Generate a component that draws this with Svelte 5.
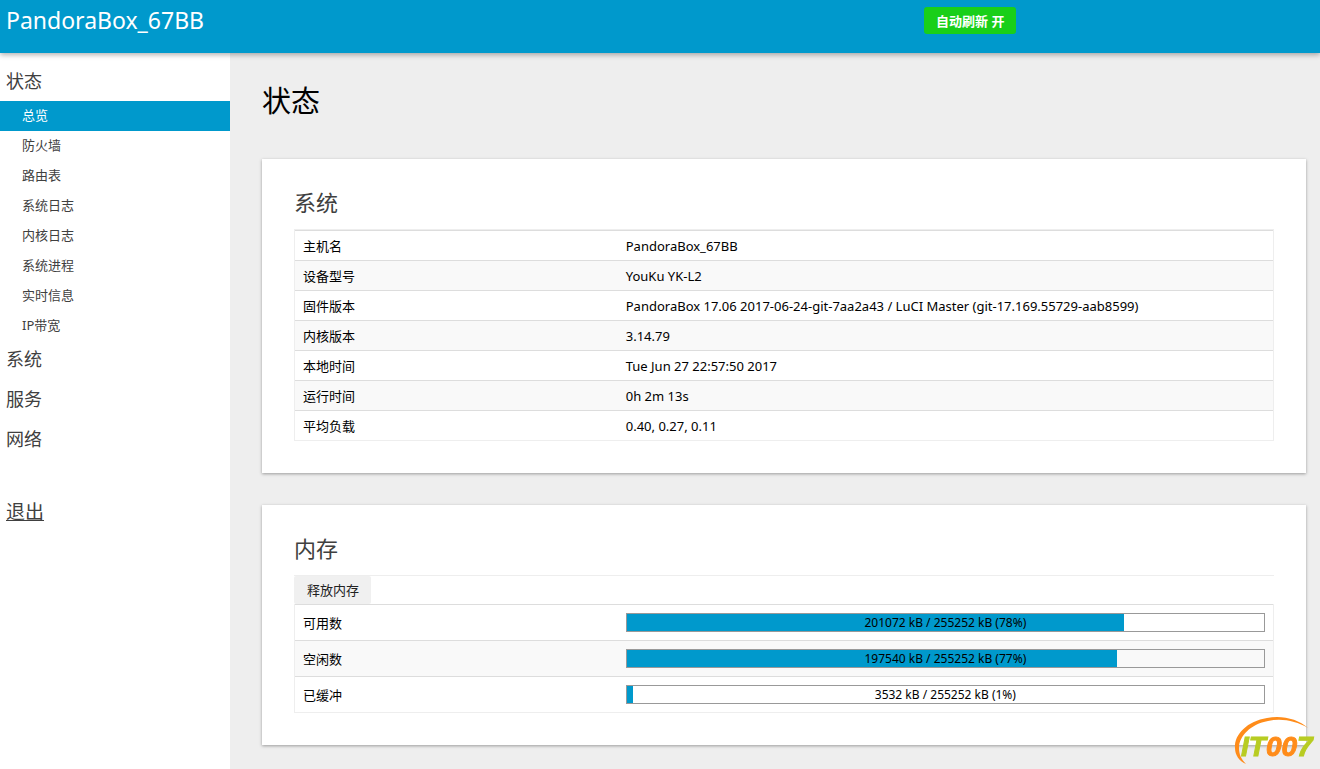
<script>
  const hostname = 'PandoraBox_67BB';

  const statusPages = [
    '总览',
    '防火墙',
    '路由表',
    '系统日志',
    '内核日志',
    '系统进程',
    '实时信息',
    'IP带宽',
  ];

  const sections = ['系统', '服务', '网络'];

  const systemInfo = [
    ['主机名', hostname],
    ['设备型号', 'YouKu YK-L2'],
    ['固件版本', 'PandoraBox 17.06 2017-06-24-git-7aa2a43 / LuCI Master (git-17.169.55729-aab8599)'],
    ['内核版本', '3.14.79'],
    ['本地时间', 'Tue Jun 27 22:57:50 2017'],
    ['运行时间', '0h 2m 13s'],
    ['平均负载', '0.40, 0.27, 0.11'],
  ];

  const total = 255252;
  const memory = [
    { label: '可用数', value: 201072, percent: 78 },
    { label: '空闲数', value: 197540, percent: 77 },
    { label: '已缓冲', value: 3532, percent: 1 },
  ];

  let activePage = $state('总览');
  let autoRefresh = $state(true);
</script>

<header>
  <a class="brand" href="#home">{hostname}</a>
  <button class="refresh" class:off={!autoRefresh} onclick={() => (autoRefresh = !autoRefresh)}>
    自动刷新 {autoRefresh ? '开' : '关'}
  </button>
</header>

<div class="layout">
  <nav>
    <ul class="menu">
      <li>
        <a class="section" href="#status">状态</a>
        <ul class="submenu">
          {#each statusPages as page}
            <li>
              <a href="#status" class:active={page === activePage} onclick={() => (activePage = page)}>{page}</a>
            </li>
          {/each}
        </ul>
      </li>
      {#each sections as section}
        <li><a class="section" href="#menu">{section}</a></li>
      {/each}
    </ul>
    <a class="logout" href="#logout">退出</a>
  </nav>

  <main>
    <h1>状态</h1>

    <section class="card">
      <h2>系统</h2>
      <div class="panel">
        <table>
          <tbody>
            {#each systemInfo as [label, value]}
              <tr>
                <th scope="row">{label}</th>
                <td>{value}</td>
              </tr>
            {/each}
          </tbody>
        </table>
      </div>
    </section>

    <section class="card">
      <h2>内存</h2>
      <div class="toolbar">
        <button class="flush">释放内存</button>
      </div>
      <div class="panel joined">
        <table class="memory">
          <tbody>
            {#each memory as row}
              <tr>
                <th scope="row">{row.label}</th>
                <td>
                  <div class="bar">
                    <div class="fill" style="width: {row.percent}%"></div>
                    <span>{row.value} kB / {total} kB ({row.percent}%)</span>
                  </div>
                </td>
              </tr>
            {/each}
          </tbody>
        </table>
      </div>
    </section>
  </main>
</div>

<svg class="logo" viewBox="0 0 84 52" width="84" height="52" aria-label="IT007">
  <path
    fill="#ff8c1a"
    d="M75 14C65 5 49 1 34 4C15 7 1 20 2 34C2 41 6 47 13 50C8 45 6 40 6 34C6 22 18 10 35 7C49 4 63 7 75 14Z"
  />
  <text x="8" y="42" font-size="28">
    <tspan class="green">IT</tspan><tspan class="orange">00</tspan><tspan class="green">7</tspan>
  </text>
</svg>

<style>
  :global(body) {
    margin: 0;
    background: #eee;
    color: #000;
    font-family: 'Noto Sans', 'Noto Sans CJK SC', sans-serif;
    font-size: 13px;
  }

  a {
    color: inherit;
    text-decoration: none;
  }

  button {
    border: 0;
    font-family: inherit;
    cursor: pointer;
  }

  ul {
    margin: 0;
    padding: 0;
    list-style: none;
  }

  header {
    position: relative;
    display: grid;
    grid-template-columns: 70% auto;
    align-items: start;
    justify-content: start;
    height: 53px;
    background: #09c;
    box-shadow: 0 2px 5px rgba(0, 0, 0, 0.3);
    color: #fff;
  }

  .brand {
    padding-left: 6px;
    font-size: 23px;
    line-height: 41px;
  }

  .refresh {
    height: 27px;
    margin-top: 7px;
    padding: 0 12px;
    border-radius: 3px;
    background: #19cf19;
    color: #fff;
    font-size: 13px;
    font-weight: bold;
  }

  .refresh.off {
    background: #999;
  }

  .layout {
    display: flex;
    min-height: calc(100vh - 53px);
  }

  nav {
    flex: 0 0 230px;
    padding-top: 8px;
    background: #fff;
    color: #404040;
  }

  .section {
    display: block;
    padding-left: 6px;
    font-size: 18px;
    line-height: 40px;
  }

  .submenu {
    margin-bottom: -2px;
  }

  .submenu a {
    display: block;
    padding: 0 0 2px 22px;
    line-height: 28px;
  }

  .submenu a.active {
    background: #09c;
    color: #fff;
  }

  .logout {
    display: inline-block;
    margin: 33px 0 0 6px;
    font-size: 19px;
    line-height: 40px;
    text-decoration: underline;
  }

  main {
    flex: 1;
    min-width: 0;
    padding: 24px 14px 0 32px;
  }

  h1 {
    margin: 0 0 34px;
    font-size: 29px;
    font-weight: normal;
    line-height: 48px;
  }

  .card {
    margin-bottom: 32px;
    padding: 32px;
    background: #fff;
    box-shadow: 0 1px 3px rgba(0, 0, 0, 0.35);
  }

  .card:last-child {
    margin-bottom: 24px;
  }

  h2 {
    margin: 0;
    padding-bottom: 16px;
    color: #404040;
    font-size: 22px;
    font-weight: normal;
    line-height: 22px;
  }

  .panel {
    border: 1px solid #eee;
  }

  .panel.joined {
    border-top: 0;
  }

  table {
    width: 100%;
    border-collapse: separate;
    border-spacing: 0;
    table-layout: fixed;
  }

  th,
  td {
    height: 29px;
    padding: 0 8px;
    border-top: 1px solid #ddd;
    font-weight: normal;
    text-align: left;
  }

  th {
    width: 33%;
    box-sizing: border-box;
  }

  .memory th,
  .memory td {
    height: 35px;
  }

  tr:nth-child(even) {
    background: #f9f9f9;
  }

  .toolbar {
    display: flex;
    border-top: 1px solid #eee;
  }

  .flush {
    height: 28px;
    padding: 0 12px 2px 13px;
    border-radius: 2px;
    background: #f0f0f0;
    color: #222;
    font-size: 13px;
  }

  .bar {
    position: relative;
    border: 1px solid #999;
    font-size: 12px;
    line-height: 17px;
    text-align: center;
  }

  .fill {
    position: absolute;
    inset: 0 auto 0 0;
    background: #09c;
  }

  .bar span {
    position: relative;
  }

  .logo {
    position: fixed;
    right: 3px;
    bottom: 3px;
  }

  .logo text {
    font-family: 'Liberation Sans', Arial, sans-serif;
    font-style: italic;
    font-weight: bold;
  }

  .green {
    fill: #b8cc22;
    stroke: #b8cc22;
  }

  .orange {
    fill: #ff8c1a;
    stroke: #ff8c1a;
  }
</style>
